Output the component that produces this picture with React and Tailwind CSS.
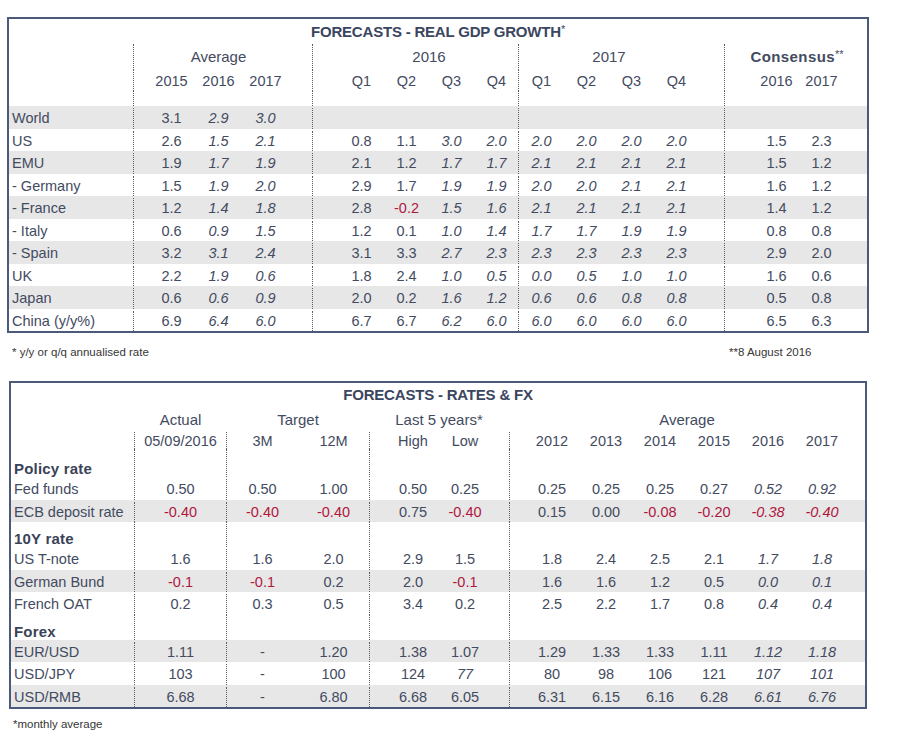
import clsx from 'clsx';

// GDP table: [label, avg x3, 2016 Q x4, 2017 Q x4, consensus x2]
const gdpRows = [
  ['World', ['3.1', '2.9', '3.0'], ['', '', '', ''], ['', '', '', ''], ['', '']],
  ['US', ['2.6', '1.5', '2.1'], ['0.8', '1.1', '3.0', '2.0'], ['2.0', '2.0', '2.0', '2.0'], ['1.5', '2.3']],
  ['EMU', ['1.9', '1.7', '1.9'], ['2.1', '1.2', '1.7', '1.7'], ['2.1', '2.1', '2.1', '2.1'], ['1.5', '1.2']],
  ['- Germany', ['1.5', '1.9', '2.0'], ['2.9', '1.7', '1.9', '1.9'], ['2.0', '2.0', '2.1', '2.1'], ['1.6', '1.2']],
  ['- France', ['1.2', '1.4', '1.8'], ['2.8', '-0.2', '1.5', '1.6'], ['2.1', '2.1', '2.1', '2.1'], ['1.4', '1.2']],
  ['- Italy', ['0.6', '0.9', '1.5'], ['1.2', '0.1', '1.0', '1.4'], ['1.7', '1.7', '1.9', '1.9'], ['0.8', '0.8']],
  ['- Spain', ['3.2', '3.1', '2.4'], ['3.1', '3.3', '2.7', '2.3'], ['2.3', '2.3', '2.3', '2.3'], ['2.9', '2.0']],
  ['UK', ['2.2', '1.9', '0.6'], ['1.8', '2.4', '1.0', '0.5'], ['0.0', '0.5', '1.0', '1.0'], ['1.6', '0.6']],
  ['Japan', ['0.6', '0.6', '0.9'], ['2.0', '0.2', '1.6', '1.2'], ['0.6', '0.6', '0.8', '0.8'], ['0.5', '0.8']],
  ['China (y/y%)', ['6.9', '6.4', '6.0'], ['6.7', '6.7', '6.2', '6.0'], ['6.0', '6.0', '6.0', '6.0'], ['6.5', '6.3']],
];

// Rates table; a leading "~" marks an italic value that sits outside the italic columns
const rateRows = [
  { cat: 'Policy rate', h: 'h-[28px]' },
  { label: 'Fed funds', v: ['0.50', '0.50', '1.00', '0.50', '0.25', '0.25', '0.25', '0.25', '0.27', '0.52', '0.92'] },
  { label: 'ECB deposit rate', gray: true, v: ['-0.40', '-0.40', '-0.40', '0.75', '-0.40', '0.15', '0.00', '-0.08', '-0.20', '-0.38', '-0.40'] },
  { cat: '10Y rate', h: 'h-[25px]' },
  { label: 'US T-note', v: ['1.6', '1.6', '2.0', '2.9', '1.5', '1.8', '2.4', '2.5', '2.1', '1.7', '1.8'] },
  { label: 'German Bund', gray: true, v: ['-0.1', '-0.1', '0.2', '2.0', '-0.1', '1.6', '1.6', '1.2', '0.5', '0.0', '0.1'] },
  { label: 'French OAT', v: ['0.2', '0.3', '0.5', '3.4', '0.2', '2.5', '2.2', '1.7', '0.8', '0.4', '0.4'] },
  { cat: 'Forex', h: 'h-[25px]' },
  { label: 'EUR/USD', gray: true, v: ['1.11', '-', '1.20', '1.38', '1.07', '1.29', '1.33', '1.33', '1.11', '1.12', '1.18'] },
  { label: 'USD/JPY', v: ['103', '-', '100', '124', '~77', '80', '98', '106', '121', '107', '101'] },
  { label: 'USD/RMB', gray: true, v: ['6.68', '-', '6.80', '6.68', '6.05', '6.31', '6.15', '6.16', '6.28', '6.61', '6.76'] },
];

const line = 'border-l border-dotted border-[#5c5c5c]';
const noLine = 'border-l border-transparent';

function Val({ v, italic, w }) {
  let text = v;
  let it = italic;
  if (text.startsWith('~')) {
    text = text.slice(1);
    it = true;
  }
  const neg = text.startsWith('-') && text.length > 1;
  return (
    <div className={clsx('text-center', w, it && 'italic', neg && 'text-[#b0173f]')}>{text}</div>
  );
}

function GdpRow({ row, gray }) {
  const [label, avg, q16, q17, cons] = row;
  return (
    <div className={clsx('flex h-[22.5px] items-center pt-[2px]', gray && 'bg-[#e7e7e7]')}>
      <div className="w-[124px] pl-[3px]">{label}</div>
      <div className={clsx('flex h-full w-[179px] items-center pl-[14px]', line)}>
        {avg.map((v, i) => (
          <Val key={i} v={v} italic={i > 0} w="w-[47px]" />
        ))}
      </div>
      <div className={clsx('flex h-full w-[207px] items-center pl-[26px]', line)}>
        {q16.map((v, i) => (
          <Val key={i} v={v} italic={i > 1} w="w-[45px]" />
        ))}
      </div>
      <div className={clsx('flex h-full w-[206px] items-center -ml-px', line)}>
        {q17.map((v, i) => (
          <Val key={i} v={v} italic w="w-[45px]" />
        ))}
      </div>
      <div className={clsx('flex h-full w-[143px] items-center pl-[29px]', line)}>
        {cons.map((v, i) => (
          <Val key={i} v={v} w="w-[45px]" />
        ))}
      </div>
    </div>
  );
}

function GdpTable() {
  return (
    <div className="ml-[7px] w-[862px] border-2 border-[#4b5a7a]">
      <div className="flex h-[25px] items-center justify-center text-[15px] font-bold tracking-[-0.2px] text-[#3b4560]">
        FORECASTS - REAL GDP GROWTH<span className="mb-[5px] text-[11px] font-normal">*</span>
      </div>
      <div className="flex h-[26px] items-center text-[15px]">
        <div className="w-[124px]" />
        <div className={clsx('flex h-full w-[179px] items-center pl-[14px]', line)}>
          <div className="w-[141px] text-center">Average</div>
        </div>
        <div className={clsx('flex h-full w-[207px] items-center pl-[26px]', line)}>
          <div className="w-[180px] text-center">2016</div>
        </div>
        <div className={clsx('flex h-full w-[206px] items-center -ml-px', line)}>
          <div className="w-[180px] text-center">2017</div>
        </div>
        <div className={clsx('flex h-full w-[143px] items-center pl-[25px]', line)}>
          <div className="flex w-[94px] items-start justify-center whitespace-nowrap font-bold tracking-[0.4px]">
            Consensus<span className="text-[11px] font-normal leading-[11px] tracking-normal">**</span>
          </div>
        </div>
      </div>
      <div className="flex h-[21px] items-center">
        <div className="w-[124px]" />
        <div className={clsx('flex h-full w-[179px] items-center pl-[14px]', line)}>
          {['2015', '2016', '2017'].map((y) => (
            <div key={y} className="w-[47px] text-center">{y}</div>
          ))}
        </div>
        <div className={clsx('flex h-full w-[207px] items-center pl-[26px]', line)}>
          {['Q1', 'Q2', 'Q3', 'Q4'].map((q) => (
            <div key={q} className="w-[45px] text-center">{q}</div>
          ))}
        </div>
        <div className={clsx('flex h-full w-[206px] items-center -ml-px', line)}>
          {['Q1', 'Q2', 'Q3', 'Q4'].map((q) => (
            <div key={q} className="w-[45px] text-center">{q}</div>
          ))}
        </div>
        <div className={clsx('flex h-full w-[143px] items-center pl-[29px]', line)}>
          {['2016', '2017'].map((y) => (
            <div key={y} className="w-[45px] text-center">{y}</div>
          ))}
        </div>
      </div>
      <div className="flex h-[15px]">
        <div className="w-[124px]" />
        <div className={clsx('w-[179px]', line)} />
        <div className={clsx('w-[207px]', line)} />
        <div className={clsx('-ml-px w-[206px]', line)} />
        <div className={clsx('w-[143px]', line)} />
      </div>
      {gdpRows.map((r, i) => (
        <GdpRow key={r[0]} row={r} gray={i % 2 === 0} />
      ))}
    </div>
  );
}

function RateCols({ vals, lines = true, className }) {
  const l = lines ? line : noLine;
  return (
    <>
      <div className={clsx('flex h-full w-[92px] items-center', l, className)}>
        <Val v={vals[0]} w="flex-1" />
      </div>
      <div className={clsx('flex h-full w-[143px] items-center', l, className)}>
        <Val v={vals[1]} w="w-[71px]" />
        <Val v={vals[2]} w="w-[71px]" />
      </div>
      <div className={clsx('flex h-full w-[140px] items-center pl-[17px]', l, className)}>
        <Val v={vals[3]} w="w-[52px]" />
        <Val v={vals[4]} w="w-[52px]" />
      </div>
      <div className={clsx('flex h-full w-[356px] items-center pl-[15px]', l, className)}>
        {vals.slice(5).map((v, i) => (
          <Val key={i} v={v} italic={i > 3} w="w-[54px]" />
        ))}
      </div>
    </>
  );
}

function RatesTable() {
  return (
    <div className="ml-[9px] mt-[22px] w-[858px] border-2 border-[#4b5a7a]">
      <div className="flex h-[24px] items-center justify-center text-[15px] font-bold tracking-[-0.2px] text-[#3b4560]">
        FORECASTS - RATES &amp; FX
      </div>
      <div className="flex h-[25px] items-center text-[15px]">
        <div className="w-[123px]" />
        <div className={clsx('w-[92px] text-center', noLine)}>Actual</div>
        <div className={clsx('w-[143px] text-center', noLine)}>Target</div>
        <div className={clsx('w-[140px] pl-[17px]', noLine)}>
          <div className="w-[104px] whitespace-nowrap text-center">Last 5 years*</div>
        </div>
        <div className={clsx('w-[356px] pl-[15px]', noLine)}>
          <div className="w-[324px] text-center">Average</div>
        </div>
      </div>
      <div className="flex h-[17px] items-center">
        <div className="w-[123px]" />
        <RateCols
          vals={['05/09/2016', '3M', '12M', 'High', 'Low', '2012', '2013', '2014', '2015', '2016', '2017']}
          className="[&>div]:not-italic"
        />
      </div>
      {rateRows.map((r) =>
        r.cat ? (
          <div key={r.cat} className={clsx('flex items-end', r.h)}>
            <div className="w-[123px] pl-[3px] text-[15px] font-bold tracking-[0.2px] text-[#3a4358]">{r.cat}</div>
            <div className={clsx('h-full w-[92px]', line)} />
            <div className={clsx('h-full w-[143px]', line)} />
            <div className={clsx('h-full w-[140px]', line)} />
            <div className={clsx('h-full w-[356px]', line)} />
          </div>
        ) : (
          <div
            key={r.label}
            className={clsx('flex h-[22.5px] items-center pt-[2px]', r.gray && 'bg-[#e7e7e7]')}
          >
            <div className="w-[123px] whitespace-nowrap pl-[3px]">{r.label}</div>
            <RateCols vals={r.v} />
          </div>
        )
      )}
    </div>
  );
}

export default function App() {
  return (
    <div className="min-h-screen w-[906px] bg-white pt-[17px] font-['Liberation_Sans',Arial,sans-serif] text-[14.5px] leading-[16px] text-[#434b61]">
      <GdpTable />
      <div className="ml-[7px] flex w-[862px] pt-[12px] text-[11.5px] leading-[14px] text-[#363636]">
        <div className="w-[722px] pl-[5px]">* y/y or q/q annualised rate</div>
        <div>**8 August 2016</div>
      </div>
      <RatesTable />
      <div className="pl-[13px] pt-[8px] text-[11.5px] leading-[14px] text-[#363636]">*monthly average</div>
    </div>
  );
}
